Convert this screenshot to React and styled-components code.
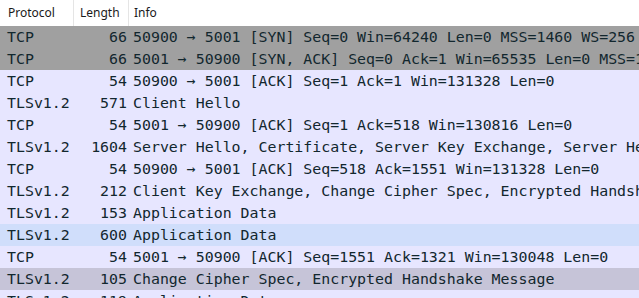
import React from 'react';
import styled, { createGlobalStyle } from 'styled-components';

const GlobalStyle = createGlobalStyle`
	html, body {
		margin: 0;
		padding: 0;
		background: #ffffff;
		overflow: hidden;
	}
`;

const PacketList = styled.div`
	width: 639px;
	height: 298px;
	overflow: hidden;
	background: #ffffff;
`;

const HeaderRow = styled.div`
	display: grid;
	grid-template-columns: 74px 55px 1fr;
	height: 26px;
	background: #ffffff;
	font-family: "Noto Sans", "Open Sans", sans-serif;
	font-size: 12px;
	color: #1a1a1a;
`;

const HeaderCell = styled.div`
	display: flex;
	align-items: center;
	padding-left: ${props => props.pad}px;
	border-right: ${props => (props.last ? 'none' : '1px solid #e5e5e5')};
	padding-bottom: 1px;
`;

const Row = styled.div`
	display: grid;
	grid-template-columns: 74px 55px 1fr;
	height: 22px;
	align-items: center;
	background: ${props => props.bg};
	color: #12272e;
	font-family: "DejaVu Sans Mono", "Liberation Mono", monospace;
	font-size: 14.9px;
	white-space: pre;
`;

const Protocol = styled.div`
	padding-left: 7px;
	overflow: hidden;
`;

const Length = styled.div`
	text-align: right;
	padding-right: 2px;
`;

const Info = styled.div`
	padding-left: 4px;
	overflow: hidden;
`;

const colors = {
	syn: '#a0a0a0',
	tcp: '#e7e6ff',
	hover: '#d0defb',
	selected: '#c6c4d8',
};

const packets = [
	{ proto: 'TCP', len: 66, info: '50900 → 5001 [SYN] Seq=0 Win=64240 Len=0 MSS=1460 WS=256 SACK_PERM', bg: 'syn' },
	{ proto: 'TCP', len: 66, info: '5001 → 50900 [SYN, ACK] Seq=0 Ack=1 Win=65535 Len=0 MSS=1460 WS=256', bg: 'syn' },
	{ proto: 'TCP', len: 54, info: '50900 → 5001 [ACK] Seq=1 Ack=1 Win=131328 Len=0', bg: 'tcp' },
	{ proto: 'TLSv1.2', len: 571, info: 'Client Hello', bg: 'tcp' },
	{ proto: 'TCP', len: 54, info: '5001 → 50900 [ACK] Seq=1 Ack=518 Win=130816 Len=0', bg: 'tcp' },
	{ proto: 'TLSv1.2', len: 1604, info: 'Server Hello, Certificate, Server Key Exchange, Server Hello Done', bg: 'tcp' },
	{ proto: 'TCP', len: 54, info: '50900 → 5001 [ACK] Seq=518 Ack=1551 Win=131328 Len=0', bg: 'tcp' },
	{ proto: 'TLSv1.2', len: 212, info: 'Client Key Exchange, Change Cipher Spec, Encrypted Handshake Message', bg: 'tcp' },
	{ proto: 'TLSv1.2', len: 153, info: 'Application Data', bg: 'tcp' },
	{ proto: 'TLSv1.2', len: 600, info: 'Application Data', bg: 'hover' },
	{ proto: 'TCP', len: 54, info: '5001 → 50900 [ACK] Seq=1551 Ack=1321 Win=130048 Len=0', bg: 'tcp' },
	{ proto: 'TLSv1.2', len: 105, info: 'Change Cipher Spec, Encrypted Handshake Message', bg: 'selected' },
	{ proto: 'TLSv1.2', len: 119, info: 'Application Data', bg: 'tcp' },
];

export default function App() {
	return (
		<PacketList>
			<GlobalStyle />
			<HeaderRow>
				<HeaderCell pad={8}>Protocol</HeaderCell>
				<HeaderCell pad={6}>Length</HeaderCell>
				<HeaderCell pad={5} last>Info</HeaderCell>
			</HeaderRow>
			{packets.map((p, i) => (
				<Row key={i} bg={colors[p.bg]}>
					<Protocol>{p.proto}</Protocol>
					<Length>{p.len}</Length>
					<Info>{p.info}</Info>
				</Row>
			))}
		</PacketList>
	);
}
